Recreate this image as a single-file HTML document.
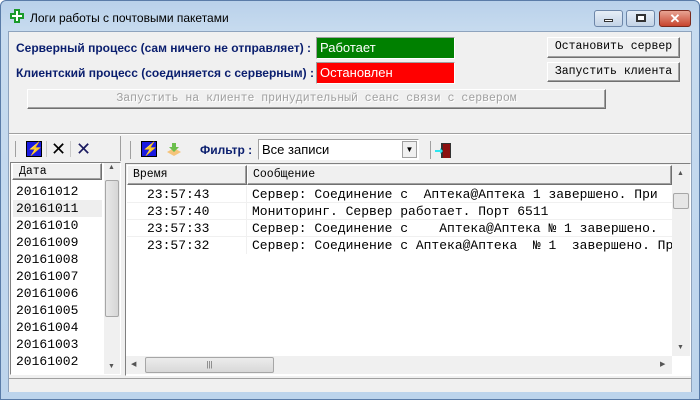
<!DOCTYPE html>
<html><head><meta charset="utf-8"><style>
*{margin:0;padding:0;box-sizing:border-box}
body{width:700px;height:400px;overflow:hidden;background:#fff;font-family:"Liberation Sans",sans-serif;position:relative}
.a{position:absolute}
.mono{font-family:"Liberation Mono",monospace;font-size:13px}
.btn{background:#f0f0f0;border:1px solid;border-color:#fff #707070 #707070 #fff;box-shadow:inset -1px -1px 0 #a0a0a0;font-family:"Liberation Mono",monospace;font-size:11.5px;text-align:center;line-height:18px;color:#000;white-space:nowrap;overflow:hidden}
.lbl{font-weight:bold;color:#0a1e6e;font-size:12px}
.sunk{border:1px solid;border-color:#a0a0a0 #fff #fff #a0a0a0}
.row{position:absolute;left:0;height:17px;line-height:17px;white-space:pre}
</style></head><body>
<div class="a" style="left:0;top:0;width:700px;height:400px;background:linear-gradient(#b9d1ea,#c7dbef 30px,#bcd4ec);border:1px solid #5a7ca8;border-radius:6px 6px 0 0"></div>
<div class="a" style="left:10px;top:9px;width:14px;height:14px">
<svg width="14" height="14"><rect x="4" y="0" width="6" height="14" fill="#1a9a2a"/><rect x="0" y="4" width="14" height="6" fill="#1a9a2a"/><rect x="6" y="2" width="2" height="10" fill="#fff"/><rect x="2" y="6" width="10" height="2" fill="#fff"/></svg></div>
<div class="a" style="left:30px;top:11px;font-size:12px;color:#000">Логи работы с почтовыми пакетами</div>
<div class="a" style="left:594px;top:10px;width:29px;height:17px;border:1px solid #6d86a8;border-radius:3px;background:linear-gradient(#e6eef7,#c3d3e6)"><div class="a" style="left:9px;top:8px;width:9px;height:3px;background:#fff;border:1px solid #333"></div></div>
<div class="a" style="left:626px;top:10px;width:29px;height:17px;border:1px solid #6d86a8;border-radius:3px;background:linear-gradient(#e6eef7,#c3d3e6)"><div class="a" style="left:9px;top:3px;width:10px;height:8px;border:2px solid #333;background:#fff"></div></div>
<div class="a" style="left:659px;top:10px;width:32px;height:17px;border:1px solid #7a2a1e;border-radius:3px;background:linear-gradient(#e8a493,#c7442e);color:#fff;font-weight:bold;font-size:13px;text-align:center;line-height:15px">✕</div>
<div class="a" style="left:8px;top:31px;width:684px;height:361px;background:#f0f0f0;border:1px solid #8ea3bd"></div>
<div class="a lbl" style="left:16px;top:41px">Серверный процесс (сам ничего не отправляет) :</div>
<div class="a lbl" style="left:16px;top:66px">Клиентский процесс (соединяется с серверным) :</div>
<div class="a sunk" style="left:316px;top:37px;width:139px;height:22px;background:#008000;color:#fff;font-size:13px;line-height:20px;padding-left:3px">Работает</div>
<div class="a sunk" style="left:316px;top:62px;width:139px;height:22px;background:#ff0000;color:#fff;font-size:13px;line-height:20px;padding-left:3px">Остановлен</div>
<div class="a btn" style="left:547px;top:37px;width:133px;height:21px">Остановить сервер</div>
<div class="a btn" style="left:547px;top:62px;width:133px;height:20px">Запустить клиента</div>
<div class="a btn" style="left:27px;top:89px;width:579px;height:20px;color:#a0a0a0;text-shadow:1px 1px 0 #fff">Запустить на клиенте принудительный сеанс связи с сервером</div>
<div class="a" style="left:9px;top:133px;width:682px;height:2px;border-top:1px solid #a0a0a0;border-bottom:1px solid #fff"></div>
<div class="a" style="left:9px;top:136px;width:112px;height:25px;border-right:1px solid #a0a0a0"></div>
<div class="a" style="left:15px;top:141px;width:1px;height:16px;background:#a0a0a0"></div>
<div class="a" style="left:26px;top:141px;width:16px;height:16px;background:#1a1ae0;border:1px solid #000;color:#ff0;font-size:13px;line-height:14px;text-align:center;font-weight:bold">⚡</div>
<div class="a" style="left:46px;top:141px;width:1px;height:16px;background:#c8c8c8"></div>
<div class="a" style="left:51px;top:140px;font-size:18px;line-height:18px">✕</div>
<div class="a" style="left:70px;top:141px;width:1px;height:16px;background:#c8c8c8"></div>
<div class="a" style="left:76px;top:140px;font-size:18px;line-height:18px;color:#1a1a60">✕</div>
<div class="a" style="left:130px;top:141px;width:1px;height:18px;background:#a0a0a0"></div>
<div class="a" style="left:141px;top:141px;width:16px;height:16px;background:#1a1ae0;border:1px solid #000;color:#ff0;font-size:13px;line-height:14px;text-align:center;font-weight:bold">⚡</div>
<div class="a" style="left:166px;top:143px;width:16px;height:12px"><svg width="16" height="14"><path d="M1 9 L8 5 L15 9 L8 13 Z" fill="#f5c47a"/><path d="M6 0h4v4h3l-5 5-5-5h3z" fill="#6bbf4c"/></svg></div>
<div class="a lbl" style="left:200px;top:143px;font-size:12px">Фильтр :</div>
<div class="a sunk" style="left:258px;top:139px;width:161px;height:21px;background:#fff;font-size:13px;line-height:19px;padding-left:3px">Все записи</div>
<div class="a" style="left:402px;top:141px;width:15px;height:17px;background:#f0f0f0;border:1px solid #a0a0a0;font-size:8px;text-align:center;line-height:16px">▼</div>
<div class="a" style="left:430px;top:141px;width:1px;height:18px;background:#a0a0a0"></div>
<div class="a" style="left:435px;top:142px"><svg width="18" height="18"><rect x="6" y="1" width="10" height="15" fill="#333"/><rect x="8" y="2" width="7" height="14" fill="#8b1010"/><path d="M0 8h5v-2l3 3-3 3v-2h-5z" fill="#2ee6f0"/></svg></div>
<div class="a" style="left:10px;top:162px;width:111px;height:213px;border:1px solid;border-color:#808080 #fff #fff #808080;background:#fff"></div>
<div class="a btn" style="left:12px;top:163px;width:90px;height:17px;text-align:left;padding-left:6px;line-height:15px">Дата</div>
<div class="a" style="left:104px;top:163px;width:16px;height:211px;background:#f0f0f0"></div>
<div class="a" style="left:105px;top:180px;width:14px;height:137px;background:linear-gradient(90deg,#e8e8e8,#d6d6d6);border:1px solid #a6a6a6;border-radius:2px"></div>
<div class="a" style="left:108px;top:164px;font-size:7px;color:#555">▲</div>
<div class="a" style="left:108px;top:363px;font-size:7px;color:#555">▼</div>
<div class="a" style="left:13px;top:200px;width:89px;height:17px;background:#eeeeee"></div>
<div class="a mono" style="left:16px;top:183px;line-height:17px">20161012<br>20161011<br>20161010<br>20161009<br>20161008<br>20161007<br>20161006<br>20161005<br>20161004<br>20161003<br>20161002</div>
<div class="a" style="left:125px;top:163px;width:566px;height:213px;border:1px solid;border-color:#808080 #fff #fff #808080;background:#fff"></div>
<div class="a" style="left:126px;top:164px;width:546px;height:21px;background:#f0f0f0"></div>
<div class="a btn" style="left:127px;top:165px;width:120px;height:20px;text-align:left;padding-left:5px">Время</div>
<div class="a btn" style="left:247px;top:165px;width:425px;height:20px;text-align:left;padding-left:5px">Сообщение</div>
<div class="a mono" style="left:127px;top:186px;width:545px;height:170px;overflow:hidden">
<div class="row" style="top:0;width:545px;border-bottom:1px solid #f0f0f0"><span style="display:inline-block;width:120px;padding-left:20px">23:57:43</span><span style="padding-left:5px">Сервер: Соединение с  Аптека@Аптека 1 завершено. При</span></div>
<div class="row" style="top:17px;width:545px;border-bottom:1px solid #f0f0f0"><span style="display:inline-block;width:120px;padding-left:20px">23:57:40</span><span style="padding-left:5px">Мониторинг. Сервер работает. Порт 6511</span></div>
<div class="row" style="top:34px;width:545px;border-bottom:1px solid #f0f0f0"><span style="display:inline-block;width:120px;padding-left:20px">23:57:33</span><span style="padding-left:5px">Сервер: Соединение с    Аптека@Аптека № 1 завершено. </span></div>
<div class="row" style="top:51px;width:545px"><span style="display:inline-block;width:120px;padding-left:20px">23:57:32</span><span style="padding-left:5px">Сервер: Соединение с Аптека@Аптека  № 1  завершено. Пр</span></div>
<div class="a" style="left:119px;top:0;width:1px;height:68px;background:#f0f0f0"></div>
</div>
<div class="a" style="left:672px;top:164px;width:18px;height:192px;background:#f0f0f0"></div>
<div class="a" style="left:673px;top:193px;width:16px;height:16px;background:#e6e6e6;border:1px solid #a6a6a6;border-radius:2px"></div>
<div class="a" style="left:677px;top:170px;font-size:7px;color:#555">▲</div>
<div class="a" style="left:677px;top:344px;font-size:7px;color:#555">▼</div>
<div class="a" style="left:126px;top:356px;width:546px;height:18px;background:#f0f0f0"></div>
<div class="a" style="left:145px;top:357px;width:129px;height:16px;background:linear-gradient(#ececec,#d8d8d8);border:1px solid #a6a6a6;border-radius:2px;font-size:8px;text-align:center;line-height:13px;color:#666">|||</div>
<div class="a" style="left:131px;top:360px;font-size:7px;color:#555">◀</div>
<div class="a" style="left:660px;top:360px;font-size:7px;color:#555">▶</div>
<div class="a" style="left:9px;top:378px;width:682px;height:14px;border-top:1px solid #a0a0a0;background:#f0f0f0"></div>
</body></html>
